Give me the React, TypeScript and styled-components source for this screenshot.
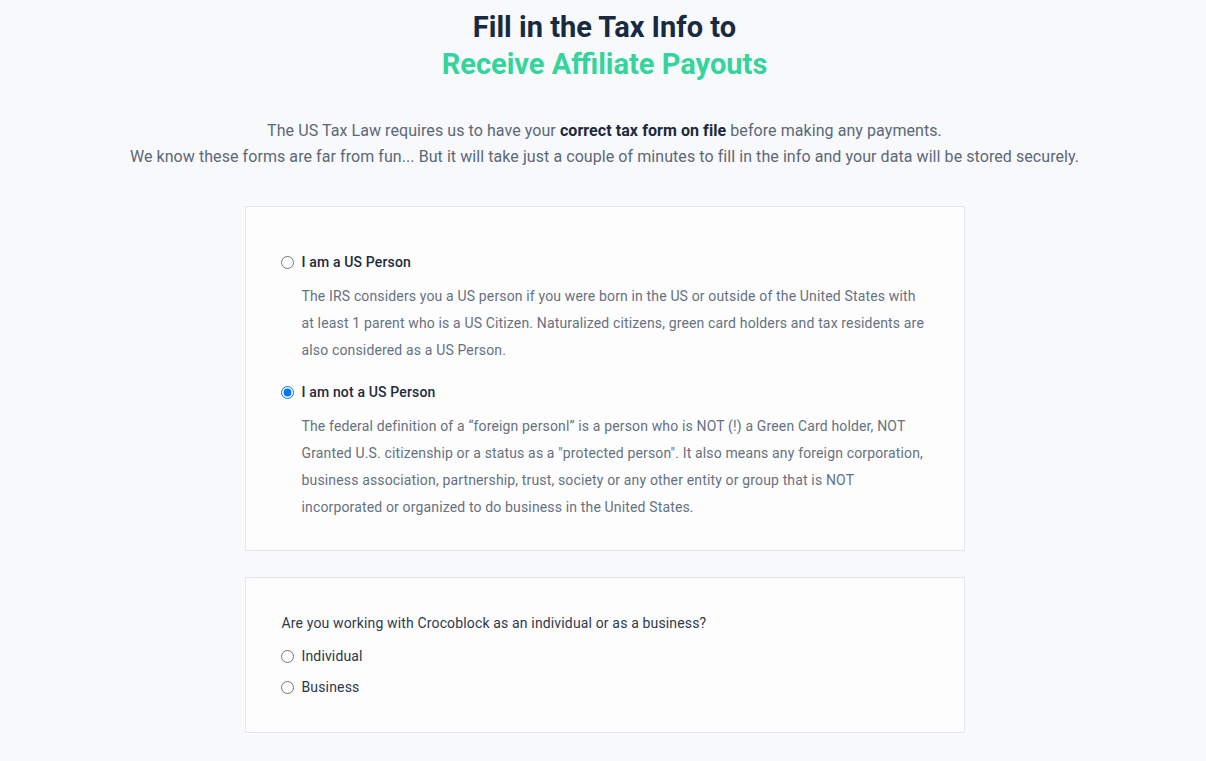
import styled, { createGlobalStyle } from "styled-components";

const GlobalStyle = createGlobalStyle`
  html, body {
    margin: 0;
    padding: 0;
    background: #f8f9fb;
    font-family: Roboto, "Liberation Sans", sans-serif;
  }
`;

const Page = styled.div`
  display: flex;
  flex-direction: column;
  align-items: center;
  padding: 9px 0 40px 3px;
`;

const Title = styled.h1`
  margin: 0;
  font-size: 29px;
  line-height: 37px;
  font-weight: 700;
  text-align: center;
  color: #172a42;
`;

const Accent = styled.span`
  display: block;
  color: #33d59c;
`;

const Intro = styled.p`
  margin: 35px 0 0;
  font-size: 16px;
  line-height: 26px;
  letter-spacing: 0.07px;
  text-align: center;
  color: #5b6878;

  strong {
    color: #1b2a3c;
    font-weight: 700;
  }
`;

const Card = styled.section<{ $top: number; $pad: string }>`
  box-sizing: border-box;
  width: 720px;
  margin-top: ${(p) => p.$top}px;
  padding: ${(p) => p.$pad};
  background: #fdfdfe;
  border: 1px solid #e4e8ee;
`;

const Option = styled.label<{ $gap?: number }>`
  display: flex;
  align-items: center;
  margin-top: ${(p) => p.$gap ?? 0}px;
  font-size: 14px;
  line-height: 20px;
  letter-spacing: 0.15px;
  color: #2a3646;
  cursor: pointer;

  input {
    margin: 0 8px 0 -1px;
    width: 13px;
    height: 13px;
  }
`;

const OptionTitle = styled.span`
  font-weight: 500;
  color: #1e2b3b;
`;

const Description = styled.p`
  margin: 11px 0 0 20px;
  font-size: 14px;
  line-height: 27px;
  letter-spacing: 0.15px;
  color: #66717f;
`;

const Question = styled.div`
  font-size: 14px;
  line-height: 20px;
  letter-spacing: 0.15px;
  color: #2e3a4a;
  margin-bottom: 13px;
`;

export default function App() {
  return (
    <>
      <GlobalStyle />
      <Page>
        <Title>
          Fill in the Tax Info to
          <Accent>Receive Affiliate Payouts</Accent>
        </Title>
        <Intro>
          The US Tax Law requires us to have your <strong>correct tax form on file</strong> before making any payments.
          <br />
          We know these forms are far from fun... But it will take just a couple of minutes to fill in the info and your data will be stored securely.
        </Intro>

        <Card $top={36} $pad="45px 36px 29px">
          <Option>
            <input type="radio" name="person" />
            <OptionTitle>I am a US Person</OptionTitle>
          </Option>
          <Description>
            The IRS considers you a US person if you were born in the US or outside of the United States with at least 1 parent who is a US Citizen. Naturalized citizens, green card holders and tax residents are also considered as a US Person.
          </Description>
          <Option $gap={18}>
            <input type="radio" name="person" defaultChecked />
            <OptionTitle>I am not a US Person</OptionTitle>
          </Option>
          <Description>
            The federal definition of a “foreign personl” is a person who is NOT (!) a Green Card holder, NOT Granted U.S. citizenship or a status as a "protected person". It also means any foreign corporation, business association, partnership, trust, society or any other entity or group that is NOT incorporated or organized to do business in the United States.
          </Description>
        </Card>

        <Card $top={26} $pad="35px 36px 35px">
          <Question>Are you working with Crocoblock as an individual or as a business?</Question>
          <Option>
            <input type="radio" name="kind" />
            Individual
          </Option>
          <Option $gap={11}>
            <input type="radio" name="kind" />
            Business
          </Option>
        </Card>
      </Page>
    </>
  );
}
